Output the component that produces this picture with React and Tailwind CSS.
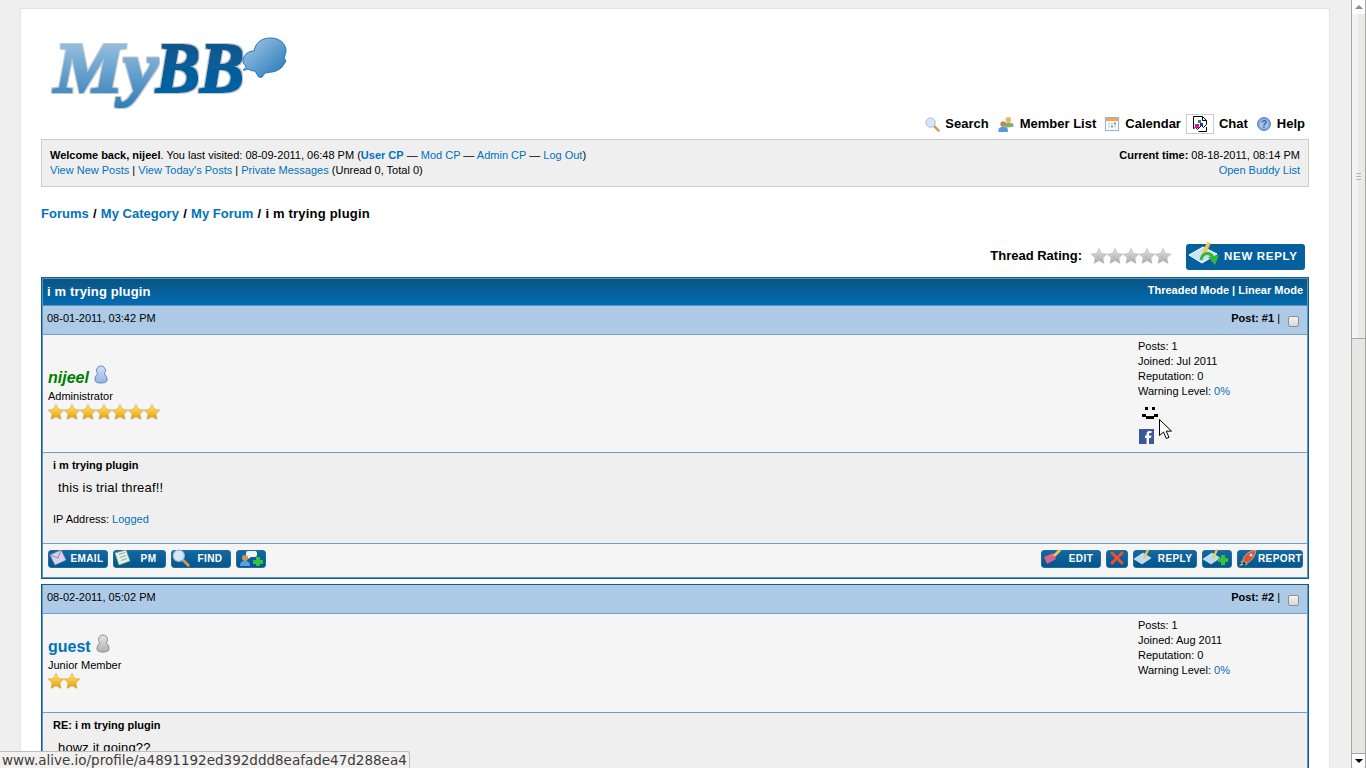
import React from "react";

const Defs = () => (
  <svg className="absolute w-0 h-0">
    <defs>
      <linearGradient id="star-gold" x1="0" y1="0" x2="0" y2="1">
        <stop offset="0" stopColor="#fbe28a" />
        <stop offset="0.55" stopColor="#f5c232" />
        <stop offset="1" stopColor="#d9992a" />
      </linearGradient>
      <linearGradient id="star-grey" x1="0" y1="0" x2="0" y2="1">
        <stop offset="0" stopColor="#e2e2e2" />
        <stop offset="1" stopColor="#a9a9a9" />
      </linearGradient>
      <linearGradient id="logo-light" x1="0" y1="0" x2="0" y2="1">
        <stop offset="0" stopColor="#a9cbe6" />
        <stop offset="1" stopColor="#2f7db8" />
      </linearGradient>
      <linearGradient id="logo-dark" x1="0" y1="0" x2="0" y2="1">
        <stop offset="0" stopColor="#0a5488" />
        <stop offset="1" stopColor="#0266aa" />
      </linearGradient>
      <linearGradient id="logo-cloud" x1="0" y1="0" x2="1" y2="1">
        <stop offset="0" stopColor="#a9cde8" />
        <stop offset="1" stopColor="#1f74b6" />
      </linearGradient>
      <linearGradient id="user-blue" x1="0" y1="0" x2="0" y2="1">
        <stop offset="0" stopColor="#d3e1f5" />
        <stop offset="1" stopColor="#94b4e2" />
      </linearGradient>
      <linearGradient id="user-grey" x1="0" y1="0" x2="0" y2="1">
        <stop offset="0" stopColor="#e6e6e6" />
        <stop offset="1" stopColor="#b0b0b0" />
      </linearGradient>
      <filter id="logo-halo" x="-10%" y="-10%" width="120%" height="125%">
        <feMorphology in="SourceGraphic" operator="dilate" radius="0.8" result="bold" />
        <feMorphology in="SourceAlpha" operator="dilate" radius="2.4" result="grown" />
        <feFlood floodColor="#c2c9cf" />
        <feComposite in2="grown" operator="in" />
        <feGaussianBlur stdDeviation="0.6" result="halo" />
        <feMerge>
          <feMergeNode in="halo" />
          <feMergeNode in="bold" />
        </feMerge>
      </filter>
    </defs>
  </svg>
);

const Logo = () => (
  <svg width="246" height="90" viewBox="0 0 246 90" className="block">
    <g fontFamily="'Liberation Serif', serif" fontWeight="bold" fontStyle="italic" fontSize="71" filter="url(#logo-halo)">
      <text x="8" y="65" fill="url(#logo-light)" textLength="104" lengthAdjust="spacingAndGlyphs">My</text>
      <text x="110" y="65" fill="url(#logo-dark)" textLength="88" lengthAdjust="spacingAndGlyphs">BB</text>
    </g>
    <path
      transform="translate(0 6)"
      d="M198 37c1-2 2-3 2-4-3-2-4-6-2-9 2-4 6-6 10-6 1-5 4-10 10-12 6-2 14-1 18 3 4 4 5 9 3 13l-1 3 2 3-2 3c-2 4-6 7-12 8-3 0-5 1-7 1l-3 4c-2 1-4 0-4-1l-3-5c-3 0-5-1-7-2-2 1-4 1-5 1z"
      fill="url(#logo-cloud)"
      stroke="#1d77bb"
    />
  </svg>
);

const SearchIcon = ({ size = 15 }) => (
  <svg width={size} height={size} viewBox="0 0 16 16">
    <path d="M9.5 9.5l5 5" stroke="#c99a63" strokeWidth="2.6" strokeLinecap="round" />
    <circle cx="6" cy="6" r="5" fill="#d6e8f7" stroke="#9fbbd4" />
  </svg>
);

const MembersIcon = () => (
  <svg width="16" height="17" viewBox="0 0 17 17">
    <circle cx="11" cy="3.5" r="3" fill="#eeb262" />
    <path d="M7.5 12V9c0-2 2-2.5 3.5-2.5s5.500.5 5.500 2.500v2z" fill="#7fb26a" />
    <circle cx="5.500" cy="8" r="3" fill="#c68455" />
    <path d="M0.500 16.500v-2.500c0-2 2.500-3 5-3s5 1 5 3v2.500z" fill="#5a97dd" />
  </svg>
);

const CalendarIcon = () => (
  <svg width="14" height="14" viewBox="0 0 14 14">
    <rect x="0.500" y="0.500" width="13" height="13" fill="#fff" stroke="#8fb3d9" />
    <rect x="1" y="1" width="12" height="3" fill="#f3a35c" />
    <path d="M3 5.500h2v2H3zM6 5.500h2v2H6zM9 5.500h2v2H9zM3 8.500h2v2H3zM9 8.500h2v2H9z" fill="#c9d8ea" />
    <path d="M6 8.500h2v2H6zM9 5.500h2v2H9z" fill="#76b15c" />
  </svg>
);

const BrokenImage = () => (
  <svg width="16" height="16" viewBox="0 0 16 16">
    <path d="M1.500.500h9l4 4v4l-3 3-2-2-4 4-2-2-2 1z" fill="#fff" stroke="#000" />
    <path d="M14.500 11v4.500h-8" fill="none" stroke="#000" />
    <path d="M10.500.500v4h4" fill="none" stroke="#000" />
    <rect x="6" y="4" width="3" height="3" fill="#1a9a3c" />
    <rect x="3" y="8" width="4" height="4" fill="#e3109a" />
    <rect x="8" y="7" width="3" height="3" fill="#1a2ee0" />
  </svg>
);

const HelpIcon = () => (
  <svg width="14" height="14" viewBox="0 0 14 14">
    <circle cx="7" cy="7" r="6.500" fill="#7ea6dc" stroke="#5d86bf" />
    <circle cx="7" cy="7" r="4.500" fill="#a9c4ea" />
    <text x="7" y="10.500" textAnchor="middle" fontSize="10" fontWeight="bold" fill="#3a63a0" fontFamily="'Liberation Sans', sans-serif">?</text>
  </svg>
);

const Star = ({ grey }) => (
  <svg width="16" height="16" viewBox="0 0 16 16" className="block shrink-0">
    <path
      d="M8 .3l2.400 5 5.500.7-4 3.800 1.100 5.600L8 12.700l-5 2.700 1.100-5.600-4-3.800 5.500-.7z"
      fill={grey ? "url(#star-grey)" : "url(#star-gold)"}
      stroke={grey ? "#bdbdbd" : "#d8a33a"}
      strokeWidth="0.600"
    />
  </svg>
);

const UserStatus = ({ grey }) => (
  <svg width="14" height="19" viewBox="0 0 14 19" className="block">
    <path
      d="M1 15c0-3 1-5 3-6-1-1-1.500-2-1.500-3.500C2.500 3 4.500 1 7 1s4.500 2 4.500 4.500c0 1.500-.5 2.500-1.500 3.500 2 1 3 3 3 6 0 2-2 3-6 3s-6-1-6-3z"
      fill={grey ? "url(#user-grey)" : "url(#user-blue)"}
      stroke={grey ? "#8c8c8c" : "#5c85c4"}
    />
  </svg>
);

const CheckBox = () => (
  <span className="block w-[11px] h-[11px] rounded-[2px] border border-[#8f8f8f] bg-gradient-to-b from-[#f4f4f4] to-[#d6d6d6]" />
);

// small icons that sit on the blue post buttons
const btnIcons = {
  email: (
    <svg width="18" height="16" viewBox="0 0 18 16">
      <path d="M1 5l11-5 5 10-11 5z" fill="#d9d3ea" stroke="#8f86b5" strokeWidth="0.500" />
      <path d="M1 5l8 3 3-8" fill="none" stroke="#8f86b5" />
    </svg>
  ),
  pm: (
    <svg width="18" height="16" viewBox="0 0 18 16">
      <path d="M1 3l11-3 4 11-11 4z" fill="#e6f0e4" stroke="#7bb27b" strokeWidth="0.700" />
      <path d="M5 4.500l6-2M6 7.500l6-2M7 10.500l6-2" stroke="#8aa6c4" />
    </svg>
  ),
  find: <SearchIcon size={18} />,
  buddy: (
    <svg width="30" height="18" viewBox="0 0 30 18">
      <path d="M9 4a2 2 0 0 1 2-2h7a2 2 0 0 1 2 2v2a2 2 0 0 1-2 2h-4l-3 2V8a2 2 0 0 1-2-2z" fill="#f2f2f2" />
      <circle cx="8" cy="9" r="3" fill="#d39263" />
      <path d="M3 17c0-4 2-5 5-5s5 1 5 5z" fill="#5aa0e6" />
      <path d="M19 9h4v3h3v4h-3v2h-4v-2h-3v-4h3z" transform="translate(0 -1)" fill="#33c43b" />
    </svg>
  ),
  edit: (
    <svg width="20" height="17" viewBox="0 0 20 17">
      <path d="M2 8l9-4 3 6-9 5z" fill="#d8638b" />
      <path d="M11 6l6-6 2 2-6 6z" fill="#f2c94c" />
    </svg>
  ),
  del: (
    <svg width="14" height="14" viewBox="0 0 14 14">
      <path d="M2 2l10 10M12 2L2 12" stroke="#f0502c" strokeWidth="3" strokeLinecap="round" />
    </svg>
  ),
  reply: (
    <svg width="20" height="17" viewBox="0 0 20 17">
      <path d="M0 10l9-6 8 5-9 6z" fill="#b9dcf5" stroke="#fff" strokeWidth="0.500" />
      <path d="M9 9l4-9 2 1-4 9z" fill="#f2c94c" />
    </svg>
  ),
  quote: (
    <svg width="28" height="17" viewBox="0 0 28 17">
      <path d="M0 10l9-6 8 5-9 6z" fill="#b9dcf5" stroke="#fff" strokeWidth="0.500" />
      <path d="M9 9l4-9 2 1-4 9z" fill="#f2c94c" />
      <path d="M18 6h4v3h3v4h-3v3h-4v-3h-3V9h3z" fill="#33c43b" />
    </svg>
  ),
  report: (
    <svg width="20" height="18" viewBox="0 0 20 18">
      <path d="M5 11c1-5 6-9 13-10-1 7-5 12-10 13z" fill="#e0522f" stroke="#f4d9cf" strokeWidth="0.600" />
      <path d="M5 11l-3 2 3 1zM8 14l-1 3 3-2z" fill="#f0a13a" />
      <path d="M4 14l-3 3 4-1z" fill="#f6d24a" />
      <circle cx="13" cy="6" r="1.500" fill="#cfe4f5" />
    </svg>
  ),
};

const PostButton = ({ icon, label, width, pad = "justify-start" }) => (
  <span
    className={`flex items-center ${pad} h-[18px] rounded-[3px] bg-gradient-to-b from-[#12689f] to-[#04568c] border border-[#1d6ca3] text-white text-[10px] font-bold tracking-[0.4px] whitespace-nowrap`}
    style={{ width }}
  >
    <span className="shrink-0 -mt-[3px]">{btnIcons[icon]}</span>
    {label && <span className="flex-1 text-center leading-none">{label}</span>}
  </span>
);

const Link = ({ children, bold }) => (
  <a className={`text-[#0072bc] ${bold ? "font-bold" : ""}`}>{children}</a>
);

const MenuItem = ({ icon, label, gap = "gap-[6px]" }) => (
  <span className={`flex items-center ${gap}`}>
    {icon}
    <span>{label}</span>
  </span>
);

const Stats = ({ joined, children }) => (
  <div className="w-[169px] shrink-0 pt-[4px] text-[11px] leading-[15px] text-black">
    <div>Posts: 1</div>
    <div>Joined: {joined}</div>
    <div>Reputation: 0</div>
    <div>Warning Level: <Link>0%</Link></div>
    {children}
  </div>
);

const PostHead = ({ date, num }) => (
  <div className="flex justify-between h-[29px] px-1 pt-[5px] bg-[#adcbe7] border-b border-[#6f9fcb] text-[11px] leading-[14px] text-black">
    <span>{date}</span>
    <span className="flex items-start mr-[4px]">
      <span>
        <b>Post: #{num}</b> |
      </span>
      <span className="ml-[8px] mt-[5px]">
        <CheckBox />
      </span>
    </span>
  </div>
);

export default function App() {
  return (
    <div className="flex h-screen overflow-hidden bg-[#efefef] font-['Liberation_Sans',sans-serif] text-black relative">
      <Defs />
      <div className="flex-1 min-w-0 overflow-hidden px-5 pt-[8px]">
        <div className="w-[1310px] bg-white border border-[#e4e4e4] px-5">
          <div className="pt-[18px] pl-[5px] h-[101px] overflow-hidden">
            <Logo />
          </div>

          <div className="flex justify-end items-center gap-[9px] h-[28px] pr-1 text-[13px] font-bold">
            <MenuItem icon={<SearchIcon />} label="Search" gap="gap-[5px]" />
            <MenuItem icon={<MembersIcon />} label="Member List" />
            <MenuItem icon={<CalendarIcon />} label="Calendar" />
            <span className="flex items-center gap-[5px] -ml-[4px]">
              <span className="flex items-center justify-center w-[28px] h-[20px] border border-[#cccccc]">
                <BrokenImage />
              </span>
              <span>Chat</span>
            </span>
            <MenuItem icon={<HelpIcon />} label="Help" />
          </div>

          <div className="flex justify-between h-[48px] mt-[1px] px-2 pt-[8px] bg-[#efefef] border border-[#cccccc] text-[11px] leading-[15px]">
            <div>
              <div>
                <b>Welcome back, nijeel</b>. You last visited: 08-09-2011, 06:48 PM (<Link bold>User CP</Link> — <Link>Mod CP</Link> — <Link>Admin CP</Link> — <Link>Log Out</Link>)
              </div>
              <div>
                <Link>View New Posts</Link> | <Link>View Today's Posts</Link> | <Link>Private Messages</Link> (Unread 0, Total 0)
              </div>
            </div>
            <div className="text-right">
              <div>
                <b>Current time:</b> 08-18-2011, 08:14 PM
              </div>
              <div>
                <Link>Open Buddy List</Link>
              </div>
            </div>
          </div>

          <div className="mt-[19px] text-[13px] leading-[15px] font-bold">
            <Link>Forums</Link> <span className="mx-[0.67px]">/</span> <Link>My Category</Link> <span className="mx-[0.67px]">/</span> <Link>My Forum</Link> <span className="mx-[0.67px]">/</span> <span className="tracking-[0.2px]">i m trying plugin</span>
          </div>

          <div className="flex justify-end items-center mt-[22px] pr-1 h-[27px] text-[13px] font-bold">
            <span className="mr-[9px] -mt-[2px]">Thread Rating:</span>
            <span className="flex mr-[15px] -mt-[2px]">
              <Star grey /><Star grey /><Star grey /><Star grey /><Star grey />
            </span>
            <span className="flex items-center w-[119px] h-[26px] rounded-[3px] bg-[#05609f] text-white text-[11.5px] tracking-[0.7px] whitespace-nowrap">
              <svg width="34" height="28" viewBox="0 0 34 28" className="ml-[2px] -mt-[6px] shrink-0">
                <path d="M1 15l14-8 14 7-15 9z" fill="#c8e2f6" stroke="#fff" />
                <path d="M13 16l6-14 4 1-7 14z" fill="#f2c94c" />
                <path d="M13 20c1-7 8-9 12-3" fill="none" stroke="#35b53c" strokeWidth="3" />
                <path d="M20 17l11-2-4 10z" fill="#35b53c" />
              </svg>
              <span className="ml-[2px] leading-none">NEW REPLY</span>
            </span>
          </div>

          <div className="mt-[7px] border border-[#0f5c8e] bg-[#5f94c0] p-px">
            <div className="flex justify-between h-[27px] px-1 bg-gradient-to-b from-[#0a5485] to-[#026cb1] border-b border-[#5f8fbb] text-white font-bold">
              <span className="text-[13px] leading-[15px] pt-[5px] tracking-[0.15px]">i m trying plugin</span>
              <span className="text-[11px] leading-[14px] pt-[4px]">Threaded Mode | Linear Mode</span>
            </div>
            <PostHead date="08-01-2011, 03:42 PM" num={1} />
            <div className="flex justify-between h-[118px] bg-[#f5f5f5] border-b border-[#6f9fcb] pl-[5px]">
              <div className="flex flex-col justify-center pb-[1px]">
                <div className="flex items-start h-[21px]">
                  <span className="text-[16px] leading-[21px] font-bold italic text-[#008000]">nijeel</span>
                  <span className="ml-[5px] -mt-[2px]"><UserStatus /></span>
                </div>
                <div className="text-[11px] leading-[14px] mt-[1px]">Administrator</div>
                <div className="flex mt-[1px]">
                  <Star /><Star /><Star /><Star /><Star /><Star /><Star />
                </div>
              </div>
              <Stats joined="Jul 2011">
                <svg width="20" height="18" viewBox="0 0 20 18" className="block mt-[7px] ml-[3px]">
                  <path d="M4 1h3v3H4zM11 1h3v3h-3zM1 8h4v3H1zM13 8h4v3h-4zM5 10h8v3H5z" fill="#000" />
                </svg>
                <svg width="15" height="15" viewBox="0 0 15 15" className="block mt-[5px] ml-[1px]">
                  <rect width="15" height="15" fill="#3b5998" />
                  <path d="M10 15V9h2l.4-2.400H10V5.200c0-.8.3-1.200 1.200-1.200h1.300V2h-2C8.500 2 7.600 3.200 7.600 5v1.600H6V9h1.600v6z" fill="#fff" />
                </svg>
              </Stats>
            </div>
            <div className="h-[91px] bg-[#efefef] border-b border-[#6f9fcb] px-[10px] pt-[5px]">
              <div className="text-[11px] leading-[14px] font-bold">i m trying plugin</div>
              <div className="text-[13px] leading-[15px] mt-[8px] pl-[5px] tracking-[0.15px]">this is trial threaf!!</div>
              <div className="text-[11px] leading-[14px] mt-[17px]">
                IP Address: <Link>Logged</Link>
              </div>
            </div>
            <div className="flex justify-between h-[33px] bg-[#f5f5f5] pt-[6px] pl-[5px] pr-[4px]">
              <div className="flex gap-[5px]">
                <PostButton icon="email" label="EMAIL" width={60} />
                <PostButton icon="pm" label="PM" width={53} />
                <PostButton icon="find" label="FIND" width={60} />
                <PostButton icon="buddy" width={30} />
              </div>
              <div className="flex gap-[5px]">
                <PostButton icon="edit" label="EDIT" width={60} />
                <PostButton icon="del" width={22} pad="justify-center" />
                <PostButton icon="reply" label="REPLY" width={64} />
                <PostButton icon="quote" width={30} />
                <PostButton icon="report" label="REPORT" width={66} />
              </div>
            </div>
          </div>

          <div className="mt-[5px] border border-[#0f5c8e] bg-[#5f94c0] px-px pb-px">
            <PostHead date="08-02-2011, 05:02 PM" num={2} />
            <div className="flex justify-between h-[99px] bg-[#f5f5f5] border-b border-[#6f9fcb] pl-[5px]">
              <div className="flex flex-col justify-center pb-[1px]">
                <div className="flex items-start h-[21px]">
                  <span className="text-[16px] leading-[21px] font-bold text-[#0072bc]">guest</span>
                  <span className="ml-[5px] -mt-[2px]"><UserStatus grey /></span>
                </div>
                <div className="text-[11px] leading-[14px] mt-[1px]">Junior Member</div>
                <div className="flex mt-[1px]">
                  <Star /><Star />
                </div>
              </div>
              <Stats joined="Aug 2011" />
            </div>
            <div className="h-[120px] bg-[#efefef] px-[10px] pt-[5px]">
              <div className="text-[11px] leading-[14px] font-bold">RE: i m trying plugin</div>
              <div className="text-[13px] leading-[15px] mt-[8px] pl-[5px] tracking-[0.15px]">howz it going??</div>
            </div>
          </div>
        </div>
      </div>

      {/* fake scrollbar */}
      <div className="flex flex-col w-[15px] h-full shrink-0 border-x border-[#a6a6a6] bg-[#e8e6e3]">
        <div className="flex items-center justify-center h-[15px] bg-white border-b border-[#a6a6a6]">
          <span className="w-0 h-0 border-x-[4px] border-x-transparent border-b-[4px] border-b-[#8a8a8a]" />
        </div>
        <div className="flex flex-col items-center justify-center gap-[1px] h-[325px] bg-gradient-to-r from-[#f5f3f1] from-50% to-[#ebe9e6] to-50% border-b border-[#a6a6a6] -mt-px">
          <span className="w-[5px] h-px bg-[#b5b5b5] mb-px" />
          <span className="w-[5px] h-px bg-[#b5b5b5] mb-px" />
          <span className="w-[5px] h-px bg-[#b5b5b5]" />
        </div>
        <div className="flex-1" />
        <div className="flex items-center justify-center h-[15px] bg-white border-t border-[#a6a6a6] rounded-b-[3px]">
          <span className="w-0 h-0 border-x-[4px] border-x-transparent border-t-[4px] border-t-black" />
        </div>
      </div>

      {/* browser link preview and mouse pointer, both over the page */}
      <div className="absolute left-0 bottom-0 h-[17px] w-[410px] px-[2px] bg-[#f2f1f0] border-t border-r border-[#bdbdbd] rounded-tr-[3px] text-[13.5px] leading-[16px] text-[#3c3c3c] font-['DejaVu_Sans',sans-serif] whitespace-nowrap overflow-hidden">
        www.alive.io/profile/a4891192ed392ddd8eafade47d288ea4
      </div>
      <svg width="14" height="21" viewBox="0 0 14 21" className="absolute left-[1159px] top-[419px]">
        <path d="M.5.500v16l4-3.500 2.800 6.500 2.700-1.200-2.800-6.200h5.300z" fill="#fff" stroke="#000" />
      </svg>
    </div>
  );
}
